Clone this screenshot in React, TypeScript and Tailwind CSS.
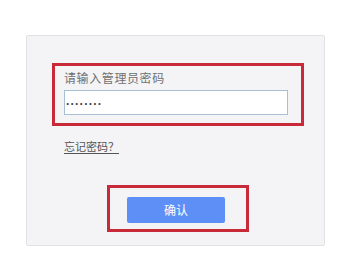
export default function App() {
  const cjk = { fontFamily: '"Noto Sans CJK SC", "Noto Sans", sans-serif' };
  return (
    <div className="w-[355px] h-[275px] bg-white overflow-hidden" style={cjk}>
      <div className="pt-[35px] pl-[26px]">
        <div className="w-[299px] h-[211px] bg-[#f4f4f6] border border-[#e2e2e6] rounded-[2px] pt-[27px] pl-[25px]">
          <div className="w-[252px] h-[63px] border-[3px] border-[#c92a3a] pt-[3px] pl-[9px]">
            <div className="text-[12px] leading-[18px] text-[#707070] tracking-[0.6px]">请输入管理员密码</div>
            <div className="mt-[3px] w-[224px] h-[25px] bg-white border border-[#a8bfd6] flex items-center pl-[1px]">
              <span
                className="text-[12px] leading-none text-[#444] font-bold tracking-[1.2px] -mt-[4px]"
                style={{ fontFamily: '"Liberation Sans", sans-serif' }}
              >
                ........
              </span>
            </div>
          </div>
          <div className="mt-[6px] pl-[12px]">
            <span className="text-[11px] leading-[14px] text-[#555] underline underline-offset-2">忘记密码？</span>
          </div>
          <div className="mt-[29px] ml-[55px] w-[142px] h-[47px] border-[3px] border-[#c92a3a] pt-[9px] pl-[17px]">
            <div className="w-[98px] h-[26px] bg-[#5d8ff6] rounded-[2px] flex items-center justify-center text-white text-[12px]">
              确认
            </div>
          </div>
        </div>
      </div>
    </div>
  );
}
